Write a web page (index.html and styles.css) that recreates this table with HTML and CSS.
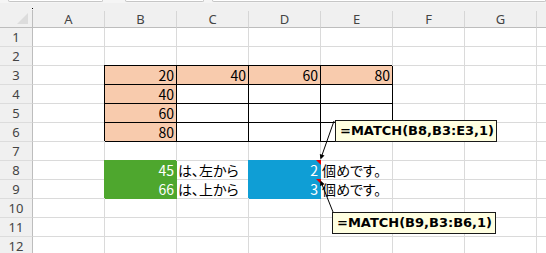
FILE: index.html
```html
<!DOCTYPE html>
<html lang="ja">

<head>
  <meta charset="UTF-8">
  <title>MATCH</title>
  <link rel="stylesheet" href="styles.css">
</head>

<body>
  <div class="topbar">
    <span class="tb-box name-box"></span>
    <span class="tb-box fx-box"></span>
    <span class="tb-box formula-box"></span>
  </div>

  <div class="sheet">
    <div class="corner"><span class="corner-mark"></span></div>
    <div class="colhead">A</div>
    <div class="colhead">B</div>
    <div class="colhead">C</div>
    <div class="colhead">D</div>
    <div class="colhead">E</div>
    <div class="colhead">F</div>
    <div class="colhead">G</div>
    <div class="colhead end"></div>

    <div class="rh">1</div>
    <div class="c"></div><div class="c"></div><div class="c"></div><div class="c"></div><div class="c"></div><div class="c"></div><div class="c"></div><div class="c end"></div>

    <div class="rh">2</div>
    <div class="c"></div><div class="c"></div><div class="c"></div><div class="c"></div><div class="c"></div><div class="c"></div><div class="c"></div><div class="c end"></div>

    <div class="rh">3</div>
    <div class="c"></div>
    <div class="c boxed salmon num">20</div>
    <div class="c boxed salmon num">40</div>
    <div class="c boxed salmon num">60</div>
    <div class="c boxed salmon num">80</div>
    <div class="c"></div><div class="c"></div><div class="c end"></div>

    <div class="rh">4</div>
    <div class="c"></div>
    <div class="c boxed salmon num">40</div>
    <div class="c boxed"></div><div class="c boxed"></div><div class="c boxed"></div>
    <div class="c"></div><div class="c"></div><div class="c end"></div>

    <div class="rh">5</div>
    <div class="c"></div>
    <div class="c boxed salmon num">60</div>
    <div class="c boxed"></div><div class="c boxed"></div><div class="c boxed"></div>
    <div class="c"></div><div class="c"></div><div class="c end"></div>

    <div class="rh">6</div>
    <div class="c"></div>
    <div class="c boxed salmon num">80</div>
    <div class="c boxed"></div><div class="c boxed"></div><div class="c boxed"></div>
    <div class="c"></div><div class="c"></div><div class="c end"></div>

    <div class="rh">7</div>
    <div class="c"></div><div class="c"></div><div class="c"></div><div class="c"></div><div class="c"></div><div class="c"></div><div class="c"></div><div class="c end"></div>

    <div class="rh">8</div>
    <div class="c"></div>
    <div class="c green num">45</div>
    <div class="c jp">は、左から</div>
    <div class="c blue num note">2</div>
    <div class="c jp">個めです。</div>
    <div class="c"></div><div class="c"></div><div class="c end"></div>

    <div class="rh">9</div>
    <div class="c"></div>
    <div class="c green num">66</div>
    <div class="c jp">は、上から</div>
    <div class="c blue num note">3</div>
    <div class="c jp">個めです。</div>
    <div class="c"></div><div class="c"></div><div class="c end"></div>

    <div class="rh">10</div>
    <div class="c"></div><div class="c"></div><div class="c"></div><div class="c"></div><div class="c"></div><div class="c"></div><div class="c"></div><div class="c end"></div>

    <div class="rh">11</div>
    <div class="c"></div><div class="c"></div><div class="c"></div><div class="c"></div><div class="c"></div><div class="c"></div><div class="c"></div><div class="c end"></div>

    <div class="rh">12</div>
    <div class="c"></div><div class="c"></div><div class="c"></div><div class="c"></div><div class="c"></div><div class="c"></div><div class="c"></div><div class="c end"></div>
  </div>

  <!-- comment boxes and their leader lines -->
  <svg class="leaders" width="546" height="253" viewBox="0 0 546 253">
    <line x1="334" y1="121" x2="321" y2="158" stroke="#000" stroke-width="1" />
    <polygon points="320.5,159.5 324.5,155.6 319.8,154" fill="#000" />
    <line x1="333" y1="212" x2="321" y2="182" stroke="#000" stroke-width="1" />
    <polygon points="320.5,180.5 324.7,184.2 320,186.1" fill="#000" />
  </svg>
  <div class="callout callout-cols">=MATCH(B8,B3:E3,1)</div>
  <div class="callout callout-rows">=MATCH(B9,B3:B6,1)</div>
</body>

</html>
```

FILE: styles.css
```css
body {
  margin: 0;
  width: 546px;
  height: 253px;
  overflow: hidden;
  background-color: #f0f0f0;
  font-family: "Noto Sans CJK JP", sans-serif;
}

/* strip with the name box / formula bar edges */
.topbar {
  display: flex;
  height: 3px;
  background-color: #f5f5f5;
  overflow: hidden;
}

.tb-box {
  height: 1px;
  background-color: #fff;
  border: 1px solid #c6c6c6;
  border-top: none;
  border-radius: 0 0 3px 3px;
}

.name-box {
  margin-left: 8px;
  width: 93px;
}

.fx-box {
  margin-left: 22px;
  width: 77px;
}

.formula-box {
  margin-left: 8px;
  flex: 1;
}

.sheet {
  display: grid;
  grid-template-columns: 33px repeat(7, 72px) 1fr;
  grid-template-rows: 25px repeat(12, 19px);
  background-color: #f0f0f0;
}

.corner {
  position: relative;
  align-self: end;
  height: 17px;
  border-right: 1px solid #bdbdbd;
  border-bottom: 1px solid #bdbdbd;
}

.corner::after {
  content: "";
  position: absolute;
  right: 4px;
  bottom: 3px;
  border-bottom: 11px solid #dcdcdc;
  border-left: 11px solid transparent;
}

.corner-mark {
  position: absolute;
  top: -2px;
  right: -1px;
  width: 1px;
  height: 1px;
  background-color: #000;
}

.colhead {
  align-self: end;
  height: 16px;
  line-height: 16px;
  text-align: center;
  font-family: "Noto Sans", sans-serif;
  font-size: 13px;
  color: #444;
  border-right: 1px solid #d6d6d6;
  border-bottom: 1px solid #bdbdbd;
}

.colhead.end {
  border-right: none;
}

.rh {
  text-align: center;
  font-family: "Noto Sans", sans-serif;
  font-size: 13px;
  line-height: 18px;
  color: #444;
  border-right: 1px solid #bdbdbd;
  border-bottom: 1px solid #dcdcdc;
}

.c {
  position: relative;
  background-color: #fff;
  border-right: 1px solid #dadada;
  border-bottom: 1px solid #dadada;
  padding: 0 2px;
  font-size: 14px;
  line-height: 18px;
  color: #000;
  white-space: nowrap;
  overflow: visible;
}

.c.end {
  border-right: none;
}

.num {
  text-align: right;
}

.jp {
  padding-left: 1px;
  font-feature-settings: "palt";
}

/* thin black borders round the lookup table */
.boxed {
  border-right-color: #000;
  border-bottom-color: #000;
  box-shadow: -1px -1px 0 #000;
}

.salmon {
  background-color: #f8cbad;
}

.green {
  background-color: #4ea72e;
  border-color: #4ea72e;
  box-shadow: -1px -1px 0 #4ea72e;
  color: #fff;
}

.blue {
  background-color: #0f9ed5;
  border-color: #0f9ed5;
  box-shadow: -1px -1px 0 #0f9ed5;
  color: #fff;
}

/* red comment marker in the top right corner */
.note::after {
  content: "";
  position: absolute;
  top: -1px;
  right: -1px;
  border-top: 5px solid #e60000;
  border-left: 5px solid transparent;
}

.leaders {
  position: absolute;
  top: 0;
  left: 0;
  pointer-events: none;
}

.callout {
  position: absolute;
  box-sizing: border-box;
  height: 22px;
  padding-left: 4px;
  background-color: #ffffe1;
  border: 1px solid #1a1a1a;
  font-family: "DejaVu Sans", sans-serif;
  font-weight: bold;
  font-size: 13px;
  line-height: 20px;
  color: #000;
  white-space: nowrap;
}

.callout-cols {
  left: 335px;
  top: 120px;
  width: 162px;
}

.callout-rows {
  left: 332px;
  top: 212px;
  width: 164px;
}
```
